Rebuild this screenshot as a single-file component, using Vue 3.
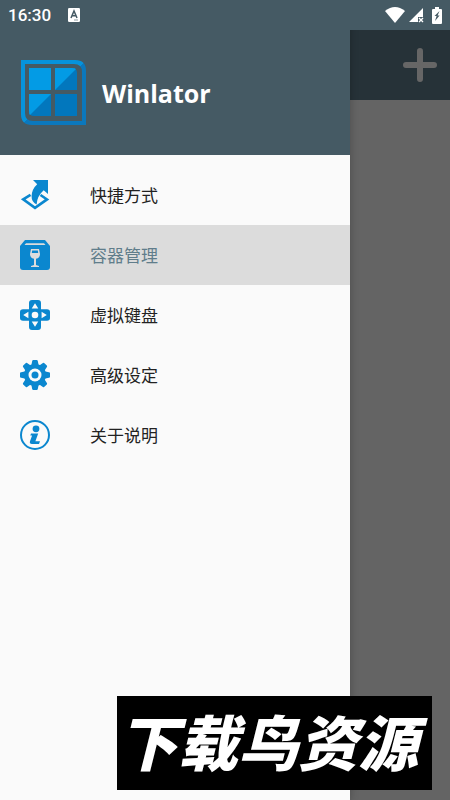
<script setup>
import { ref } from 'vue'

const items = [
  { id: 'shortcuts', label: '快捷方式' },
  { id: 'containers', label: '容器管理' },
  { id: 'controls', label: '虚拟键盘' },
  { id: 'settings', label: '高级设定' },
  { id: 'about', label: '关于说明' }
]
const active = ref('containers')
const teeth = [0, 45, 90, 135, 180, 225, 270, 315]
</script>

<template>
  <div class="screen">
    <aside class="drawer">
      <header class="brand">
        <svg class="logo" viewBox="0 0 66 66" aria-hidden="true">
          <defs>
            <linearGradient id="frame" x1="0" y1="0" x2="1" y2="1">
              <stop offset="0.5" stop-color="#0693dc" />
              <stop offset="0.5" stop-color="#0b78bd" />
            </linearGradient>
          </defs>
          <path fill="url(#frame)" fill-rule="evenodd" d="M1 0H55Q66 0 66 11V65H12Q1 65 1 54ZM5 4V53Q5 61 13 61H62V12Q62 4 54 4Z" />
          <path fill="#0277bd" d="M35 8H52Q57 8 57 13V30H35ZM35 34H57V56H35ZM9 34H31V56H14Q9 56 9 51Z" />
          <path fill="#039be5" d="M9 8H31V30H9ZM35 8H52Q55 8 56 9L35 30ZM9 34H31L10 55Q9 54 9 51Z" />
        </svg>
        <h1 class="title">Winlator</h1>
      </header>

      <nav class="menu">
        <a
          v-for="item in items"
          :key="item.id"
          :href="'#' + item.id"
          class="entry"
          :class="{ active: active === item.id }"
          @click.prevent="active = item.id"
        >
          <svg class="icon" viewBox="0 0 30 30" aria-hidden="true">
            <template v-if="item.id === 'shortcuts'">
              <path fill="none" stroke="currentColor" stroke-width="2.6" d="M10.5 14.8L3.2 19.4L15 27.8L27 19.4L20.5 15" />
              <path d="M13 0H28V14L23.7 10.2Q17 16 16.6 24.5Q11.4 22 11.6 16Q12 9 17.2 4.3Z" />
            </template>
            <template v-else-if="item.id === 'containers'">
              <path d="M5 0H25L30 6V27Q30 30 27 30H3Q0 30 0 27V6Z" />
              <path class="cut" d="M6 3.2H24L25.5 5H4.5ZM11 9H19L20 14Q20 18 16 18.7V25L19 26V27H11V26L14 25V18.7Q10 18 10 14Z" />
              <path d="M12.1 10.4H17.9L18.2 13H11.8Z" />
            </template>
            <template v-else-if="item.id === 'controls'">
              <path d="M12 0H18Q21 0 21 3V9.3H27Q30 9.3 30 12V18Q30 20.7 27 20.7H21V27Q21 30 18 30H12Q9 30 9 27V20.7H3Q0 20.7 0 18V12Q0 9.3 3 9.3H9V3Q9 0 12 0Z" />
              <circle class="cut" cx="15" cy="15" r="3.3" />
              <path class="cut" d="M15 3.2L18.3 8.4H11.7ZM15 26.8L11.7 21.6H18.3ZM3.2 15L8.4 11.7V18.3ZM26.8 15L21.6 18.3V11.7Z" />
            </template>
            <template v-else-if="item.id === 'settings'">
              <path v-for="angle in teeth" :key="angle" :transform="'rotate(' + angle + ' 15 15)'" d="M11 7L12.2 1Q12.4 0 13.3 0H16.7Q17.6 0 17.8 1L19 7Z" />
              <circle cx="15" cy="15" r="11" />
              <circle class="cut" cx="15" cy="15" r="6.5" />
              <circle cx="15" cy="15" r="3.5" />
            </template>
            <template v-else>
              <circle cx="15" cy="15" r="14" fill="none" stroke="currentColor" stroke-width="2" />
              <circle cx="16" cy="8.8" r="3.4" />
              <path d="M11 13.4H18.2L15.4 21.3H20L19 24H12Q9.2 24 10 21.3L12.1 15.4H10.3Z" />
            </template>
          </svg>
          <span>{{ item.label }}</span>
        </a>
      </nav>
    </aside>

    <main class="page">
      <div class="toolbar">
        <button class="add" type="button" aria-label="Add">
          <svg viewBox="0 0 34 34" aria-hidden="true">
            <path fill="none" stroke="#666" stroke-width="6" stroke-linecap="round" d="M17 3V31M3 17H31" />
          </svg>
        </button>
      </div>
    </main>

    <div class="status">
      <time>16:30</time>
      <svg class="badge" viewBox="0 0 12 14" aria-hidden="true">
        <rect width="12" height="14" rx="1.2" fill="#fff" />
        <path fill="none" stroke="#455a64" stroke-width="1.5" d="M3 10L6 3L9 10M4 7.8H8" />
        <path stroke="#455a64" stroke-width="0.6" d="M6 12H10" />
      </svg>
      <div class="signals">
        <svg class="wifi" viewBox="0 0 20 16" aria-hidden="true">
          <path fill="#fff" d="M0 4Q10-4 20 4L10 16Z" />
        </svg>
        <svg class="cell" viewBox="0 0 15 15" aria-hidden="true">
          <path fill="#fff" d="M14 0V9H9V14H0Z" />
          <path stroke="#fff" stroke-width="1.4" d="M10 10L14 14M14 10L10 14" />
        </svg>
        <svg class="battery" viewBox="0 0 10 17" aria-hidden="true">
          <path fill="#fff" d="M3 0H7V2H9Q10 2 10 3V16Q10 17 9 17H1Q0 17 0 16V3Q0 2 1 2H3Z" />
          <path fill="#455a64" d="M7.5 4L2.5 9H4.6L3 14L7.6 8.5H5.6Z" />
        </svg>
      </div>
    </div>

    <div class="watermark">下载鸟资源</div>
  </div>
</template>

<style>
body {
  margin: 0;
}
</style>

<style scoped>
.screen {
  position: relative;
  display: grid;
  grid-template-columns: minmax(0, 350px) minmax(100px, 1fr);
  min-height: 100vh;
  background: #646464;
  font-family: "Noto Sans", "Noto Sans CJK SC", sans-serif;
}
.drawer {
  background: #fafafa;
  box-shadow: 0 0 8px rgba(0, 0, 0, 0.25);
  z-index: 1;
}
.brand {
  display: flex;
  align-items: center;
  gap: 16px;
  box-sizing: border-box;
  height: 155px;
  padding: 30px 20px 0;
  background: #455a64;
}
.logo {
  width: 66px;
  height: 66px;
}
.title {
  margin: 0;
  color: #fff;
  font: bold 25px/36px "Open Sans", sans-serif;
}
.menu {
  padding: 10px 0;
}
.entry {
  display: flex;
  align-items: center;
  gap: 40px;
  height: 60px;
  padding: 0 20px;
  color: #222;
  font-family: "Noto Sans CJK SC", sans-serif;
  font-size: 17px;
  line-height: 26px;
  text-decoration: none;
}
.active {
  background: #dcdcdc;
  color: #607d8b;
}
.icon {
  width: 30px;
  height: 30px;
  color: #0b87cf;
  fill: currentColor;
}
.cut {
  fill: #fafafa;
}
.active .cut {
  fill: #dcdcdc;
}
.page {
  padding-top: 30px;
}
.toolbar {
  display: flex;
  align-items: center;
  justify-content: flex-end;
  height: 70px;
  padding-right: 13px;
  background: #263238;
}
.add {
  width: 34px;
  height: 34px;
  padding: 0;
  border: 0;
  background: none;
}
.add svg {
  display: block;
}
.status {
  position: absolute;
  inset: 0 0 auto;
  z-index: 2;
  display: flex;
  align-items: center;
  gap: 17px;
  box-sizing: border-box;
  height: 30px;
  padding: 0 8px;
  background: #455a64;
  color: #fff;
  font: 500 17px/30px Roboto, sans-serif;
}
.badge {
  width: 12px;
  height: 14px;
}
.signals {
  display: flex;
  align-items: center;
  gap: 4px;
  margin-left: auto;
}
.wifi {
  width: 20px;
  height: 16px;
}
.cell {
  width: 15px;
  height: 15px;
  margin-right: 4px;
}
.battery {
  width: 10px;
  height: 17px;
}
.watermark {
  position: absolute;
  right: 18px;
  bottom: 10px;
  z-index: 3;
  box-sizing: border-box;
  width: 315px;
  padding: 0 14px 6px 0;
  background: #000;
  color: #fff;
  font: italic 900 60px/88px "Noto Sans CJK SC", sans-serif;
  text-align: right;
  white-space: nowrap;
}
</style>
